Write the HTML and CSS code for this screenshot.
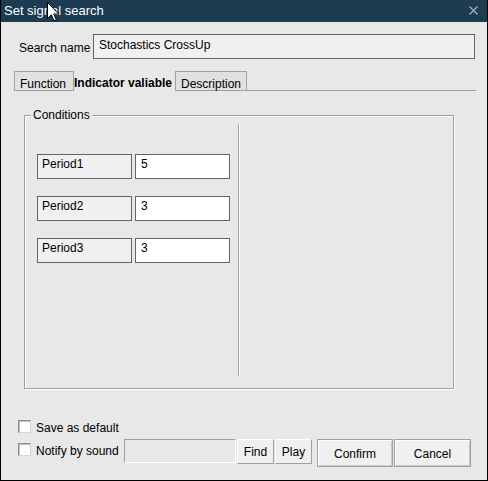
FILE: index.html
```html
<!DOCTYPE html>
<html>
<head>
<meta charset="utf-8">
<link rel="stylesheet" href="styles.css">
</head>
<body>
<div class="window">
  <div class="titlebar">
    <span class="title">Set signal search</span>
    <svg class="close" width="9" height="9" viewBox="0 0 9 9"><path d="M0.5 0.5 L8.5 8.5 M8.5 0.5 L0.5 8.5" stroke="#a9b6bf" stroke-width="1.1" fill="none"/></svg>
  </div>
  <div class="search-row">
    <span class="search-label">Search name</span>
    <div class="search-input">Stochastics CrossUp</div>
  </div>
  <div class="tabs">
    <div class="tab">Function</div>
    <div class="tab active">Indicator valiable</div>
    <div class="tab">Description</div>
    <div class="tab-fill"></div>
  </div>
  <div class="group">
    <span class="legend">Conditions</span>
    <div class="params">
      <div class="param"><div class="pname">Period1</div><div class="pval">5</div></div>
      <div class="param"><div class="pname">Period2</div><div class="pval">3</div></div>
      <div class="param"><div class="pname">Period3</div><div class="pval">3</div></div>
    </div>
    <div class="sep"></div>
  </div>
  <div class="bottom">
    <div class="row1">
      <span class="check"></span><span class="clabel">Save as default</span>
    </div>
    <div class="row2">
      <span class="check check2"></span><span class="clabel clabel2">Notify by sound</span>
      <div class="sound-field"></div>
      <button class="btn small first">Find</button>
      <button class="btn small">Play</button>
      <button class="btn big confirm">Confirm</button>
      <button class="btn big">Cancel</button>
    </div>
  </div>
  <svg class="cursor" width="13" height="20" viewBox="0 0 13 20"><path d="M0.5 0.5 L0.5 16.5 L4.3 12.8 L7 18.8 L9.3 17.8 L6.7 12 L11.8 12 Z" fill="#fff" stroke="#000" stroke-width="1" stroke-linejoin="miter"/></svg>
</div>
</body>
</html>
```

FILE: styles.css
```css
* { box-sizing: border-box; }
html, body { margin: 0; padding: 0; }
body {
  font-family: "Liberation Sans", Arial, sans-serif;
  font-size: 12px;
  color: #000;
  background: #e8e8e8;
}
.window {
  position: relative;
  width: 488px;
  height: 481px;
  background: #e8e8e8;
  border-left: 1px solid #000;
  border-right: 1px solid #000;
  border-bottom: 1px solid #000;
  overflow: hidden;
}
.titlebar {
  height: 22px;
  background: #1d3b51;
  color: #fff;
  display: flex;
  align-items: center;
  justify-content: space-between;
  padding: 0 9px 0 3px;
  font-size: 13px;
}
.title { line-height: 22px; }
.close { display: block; margin-top: -1px; }

.search-row {
  display: flex;
  align-items: center;
  margin-top: 12px;
  padding-left: 18px;
}
.search-label {
  width: 74px;
  padding-top: 2px;
}
.search-input {
  width: 382px;
  height: 25px;
  border: 1px solid #646464;
  background: #f0f0f0;
  padding: 3px 0 0 5px;
  line-height: 14px;
}

.tabs {
  display: flex;
  margin: 12px 11px 0 13px;
  height: 20px;
}
.tab {
  height: 20px;
  border: 1px solid #a0a0a0;
  background: #e1e1e1;
  padding: 5px 0 0 5px;
  line-height: 14px;
  width: 60px;
}
.tab.active {
  border: none;
  background: #e8e8e8;
  font-weight: bold;
  width: 101px;
  padding-left: 0;
  padding-top: 5px;
}
.tab:nth-child(3) { width: 72px; }
.tab-fill {
  flex: 1;
  border-bottom: 1px solid #a0a0a0;
}

.group {
  position: relative;
  display: flex;
  align-items: flex-start;
  width: 430px;
  height: 274px;
  margin: 24px 0 0 23px;
  border: 1px solid #a0a0a0;
  box-shadow: inset 1px 1px 0 #fff, 1px 1px 0 #fff;
  padding: 8px 0 0 12px;
}
.legend {
  position: absolute;
  left: 6px;
  top: -9px;
  padding: 0 2px;
  background: #e8e8e8;
  line-height: 16px;
}
.params {
  display: flex;
  flex-direction: column;
  gap: 17px;
  padding-top: 30px;
  width: 193px;
}
.param {
  display: flex;
  gap: 3px;
}
.pname, .pval {
  width: 95px;
  height: 25px;
  border: 1px solid #646464;
  padding: 2px 0 0 4px;
  line-height: 14px;
}
.pname { background: #f0f0f0; }
.pval { background: #fff; padding-left: 5px; }
.sep {
  width: 1px;
  height: 252px;
  margin-left: 8px;
  background: #a0a0a0;
  box-shadow: 1px 0 0 #fff;
}

.bottom {
  margin-top: 31px;
  padding-left: 17px;
}
.row1, .row2 {
  display: flex;
  align-items: center;
}
.row1 { height: 13px; }
.row2 {
  margin-top: 6px;
  align-items: flex-start;
}
.check {
  display: block;
  width: 13px;
  height: 13px;
  background: #fff;
  border: 1px solid;
  border-color: #8c8c8c #d4d4d4 #d4d4d4 #8c8c8c;
  box-shadow: inset 1px 1px 0 #c0c0c0;
}
.check2 { margin-top: 4px; }
.clabel {
  margin-left: 5px;
  line-height: 14px;
  padding-top: 2px;
}
.clabel2 {
  width: 88px;
  padding-top: 5px;
}
.sound-field {
  width: 112px;
  height: 24px;
  background: #e8e8e8;
  border: 1px solid;
  border-color: #a0a0a0 #fff #fff #a0a0a0;
}
.btn {
  font-family: "Liberation Sans", Arial, sans-serif;
  font-size: 12px;
  color: #000;
  background: #f0f0f0;
  margin: 0 0 0 1px;
  padding: 0;
  text-align: center;
  line-height: 14px;
}
.btn.small {
  width: 37px;
  height: 25px;
  border: 1px solid;
  border-color: #fff #a0a0a0 #a0a0a0 #fff;
}
.btn.big {
  width: 77px;
  height: 28px;
  border: 1px solid #a0a0a0;
  box-shadow: inset 1px 1px 0 #fff, inset -1px -1px 0 #c8c8c8;
  padding-top: 2px;
}
.btn.confirm { margin-left: 5px; width: 76px; }

.cursor {
  position: absolute;
  left: 46px;
  top: 2px;
}
```
